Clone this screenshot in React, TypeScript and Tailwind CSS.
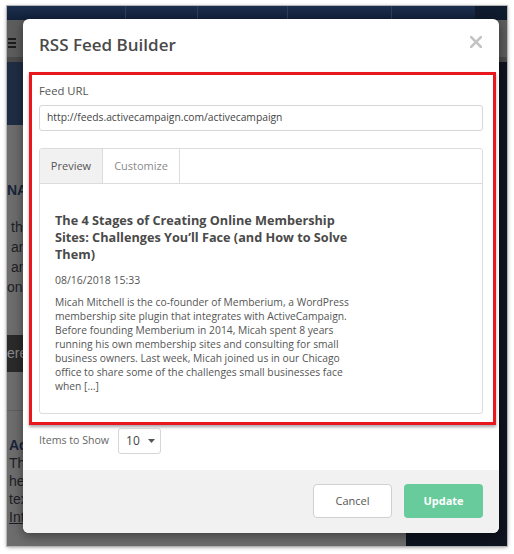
export default function App() {
  return (
    <div className="relative w-[514px] h-[554px] bg-white font-['Open_Sans',sans-serif]">
      {/* screenshot frame with dimmed page behind */}
      <div className="pt-[6px] pl-[7px]">
        <div className="w-[500px] h-[540px] flex flex-col overflow-hidden outline outline-1 outline-[#b5b5b5] shadow-[0_1px_4px_rgba(0,0,0,0.45)]">
          <div className="h-[14px] shrink-0 flex bg-gradient-to-b from-[#1c2f4e] to-[#12213a]">
            <div className="w-[119px] border-r border-[#2c4060]" />
            <div className="w-[72px] border-r border-[#2c4060]" />
            <div className="w-[90px] border-r border-[#2c4060]" />
            <div className="w-[104px] border-r border-[#2c4060]" />
            <div className="w-[83px]" />
            <div className="flex-1 bg-[#0f1b2e]" />
          </div>
          <div className="h-[37px] shrink-0 bg-[#5d5d5d] pt-[18px] pl-[1px]">
            <div className="flex flex-col gap-[2px] w-[8px]">
              <div className="h-[2px] bg-[#1c1c1c]" />
              <div className="h-[2px] bg-[#1c1c1c]" />
              <div className="h-[2px] bg-[#1c1c1c]" />
            </div>
          </div>
          <div className="h-[5px] shrink-0 bg-[#4b4b4b]" />
          <div className="flex-1 flex">
            <div className="w-[399px] flex flex-col">
              <div className="h-[63px] bg-[#1f2d44]" />
              <div className="flex-1 bg-[#6d6d6d] font-['Liberation_Sans',sans-serif] text-[14px] text-[#1e1e26]">
                <div className="mt-[55px] leading-[20px] font-bold text-[#18243a]">NAME</div>
                <div className="mt-[17px] pl-[4px] leading-[20px]">
                  <div>that</div>
                  <div>and</div>
                  <div>an</div>
                  <div className="-ml-[4px]">ons</div>
                </div>
                <div className="mt-[38px] h-[37px] bg-[#2a2a2a] flex items-center text-[#8a8a8a]">ere</div>
                <div className="mt-[38px] h-px bg-[#5f5f5f]" />
                <div className="mt-[25px] pl-[2px] leading-[18px]">
                  <div className="font-bold text-[#18243a]">Ac</div>
                  <div>Th</div>
                  <div>he</div>
                  <div>tex</div>
                  <div className="underline">Int</div>
                </div>
              </div>
            </div>
            <div className="flex-1 bg-[#0e1420]" />
          </div>
        </div>
      </div>

      {/* modal */}
      <div className="absolute left-[23px] top-[19px] w-[476px] h-[514px] bg-white rounded-[6px] shadow-[0_3px_12px_rgba(0,0,0,0.45)] flex flex-col">
        <div className="h-[53px] shrink-0 flex items-start justify-between pl-[16px] pr-[17px] pt-[14px]">
          <h1 className="text-[17px] leading-[24px] font-semibold text-[#4a4a4a]">RSS Feed Builder</h1>
          <svg width="12" height="12" viewBox="0 0 12 12" className="mt-[3px]">
            <path d="M1 1L11 11M11 1L1 11" stroke="#c4c4c4" strokeWidth="2.6" strokeLinecap="square" />
          </svg>
        </div>

        <div className="ml-[6px] mr-[3px] h-[353px] border-[3px] border-[#e8161d] shadow-[0_2px_3px_rgba(0,0,0,0.35)] pl-[7px] pr-[10px] pt-[8px]">
          <div className="text-[11.3px] leading-[16px] text-[#555]">Feed URL</div>
          <div className="mt-[6px] h-[26px] border border-[#d6d6d6] rounded-[3px] px-[7px] flex items-center text-[10.3px] text-[#444]">
            http://feeds.activecampaign.com/activecampaign
          </div>
          <div className="mt-[17px] h-[266px] border border-[#dcdcdc] rounded-[3px] flex flex-col">
            <div className="h-[35px] shrink-0 border-b border-[#dcdcdc] flex text-[11px]">
              <div className="w-[63px] bg-[#f1f1f1] border-r border-[#dcdcdc] flex items-center justify-center text-[#555] font-medium rounded-tl-[3px]">
                Preview
              </div>
              <div className="w-[77px] border-r border-[#dcdcdc] flex items-center justify-center text-[#8a8a8a]">
                Customize
              </div>
            </div>
            <div className="px-[15px] pt-[28px]">
              <div className="text-[12.7px] leading-[17px] font-bold text-[#4a4a4a] whitespace-nowrap">
                <div>The 4 Stages of Creating Online Membership</div>
                <div>Sites: Challenges You’ll Face (and How to Solve</div>
                <div>Them)</div>
              </div>
              <div className="mt-[10px] text-[10.5px] leading-[14px] text-[#555]">08/16/2018 15:33</div>
              <div className="mt-[8px] text-[10.3px] leading-[14px] text-[#555] whitespace-nowrap">
                <div>Micah Mitchell is the co-founder of Memberium, a WordPress</div>
                <div>membership site plugin that integrates with ActiveCampaign.</div>
                <div>Before founding Memberium in 2014, Micah spent 8 years</div>
                <div>running his own membership sites and consulting for small</div>
                <div>business owners. Last week, Micah joined us in our Chicago</div>
                <div>office to share some of the challenges small businesses face</div>
                <div>when […]</div>
              </div>
            </div>
          </div>
        </div>

        <div className="mt-[3px] pl-[16px] flex items-center gap-[9px]">
          <span className="text-[10.6px] text-[#666]">Items to Show</span>
          <div className="w-[43px] h-[26px] border border-[#d6d6d6] rounded-[3px] flex items-center pl-[7px] gap-[8px] text-[12px] text-[#444]">
            <span>10</span>
            <svg width="7" height="4" viewBox="0 0 7 4">
              <path d="M0 0H7L3.5 4Z" fill="#555" />
            </svg>
          </div>
        </div>

        <div className="mt-auto h-[63px] shrink-0 bg-[#f1f1f1] rounded-b-[6px] flex justify-end items-start pt-[14px] pr-[16px] gap-[12px]">
          <div className="w-[79px] h-[34px] bg-white border border-[#d0d0d0] rounded-[4px] flex items-center justify-center text-[11px] text-[#555] font-medium">
            Cancel
          </div>
          <div className="w-[79px] h-[34px] bg-[#67cb9b] rounded-[4px] flex items-center justify-center text-[11px] text-white font-bold">
            Update
          </div>
        </div>
      </div>
    </div>
  );
}
